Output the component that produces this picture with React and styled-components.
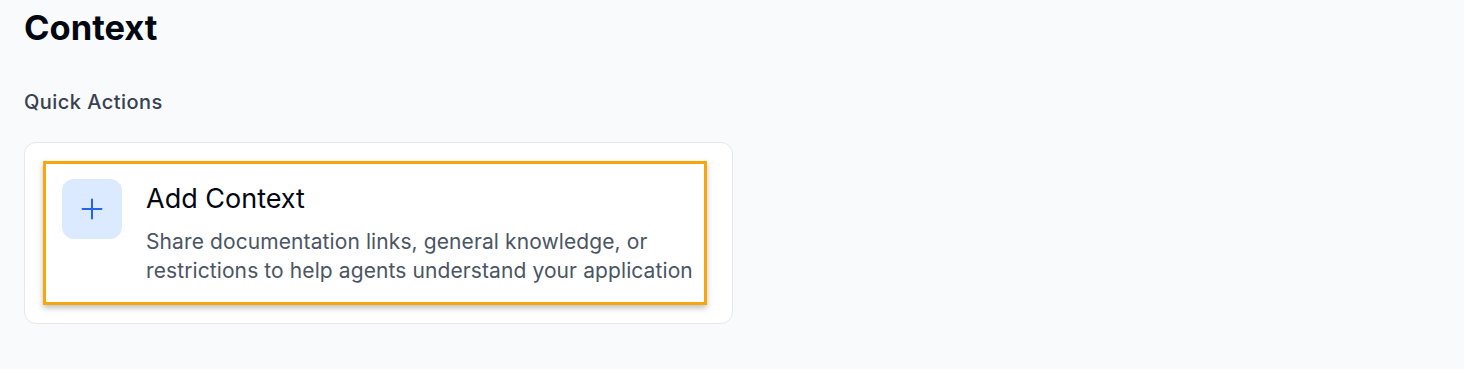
import React from "react";
import styled, { createGlobalStyle } from "styled-components";

const Global = createGlobalStyle`
	html, body {
		margin: 0;
		background: #f9fafb;
		font-family: Inter, "Noto Sans", sans-serif;
	}
`;

const Page = styled.div`
	padding: 6px 24px 24px;
`;

const Title = styled.h1`
	margin: 0;
	font-size: 34.5px;
	line-height: 44px;
	font-weight: 700;
	color: #030712;
`;

const Section = styled.h2`
	margin: 38px 0 26px;
	font-size: 20px;
	line-height: 28px;
	font-weight: 500;
	letter-spacing: 0.45px;
	color: #374151;
`;

const Panel = styled.div`
	width: 709px;
	box-sizing: border-box;
	padding: 18px;
	background: #fff;
	border: 1px solid #e5e7eb;
	border-radius: 12px;
`;

const Action = styled.button`
	display: flex;
	gap: 24px;
	align-items: flex-start;
	box-sizing: border-box;
	padding: 15px 11px 17px 16px;
	background: #fff;
	border: 3px solid #f5a70d;
	box-shadow: 0 3px 6px rgba(0, 0, 0, 0.25);
	font-family: inherit;
	text-align: left;
	cursor: pointer;
`;

const IconBox = styled.div`
	flex: none;
	width: 60px;
	height: 60px;
	border-radius: 12px;
	background: #dbeafe;
	color: #2563eb;
	display: flex;
	align-items: center;
	justify-content: center;
`;

const Body = styled.div`
	display: flex;
	flex-direction: column;
	gap: 12px;
	padding-top: 4px;
`;

const ActionTitle = styled.div`
	font-size: 27px;
	line-height: 32px;
	font-weight: 400;
	color: #030712;
`;

const ActionText = styled.div`
	font-size: 21px;
	line-height: 29px;
	letter-spacing: 0.1px;
	color: #4b5563;
`;

const Plus = () => (
	<svg width="24" height="24" viewBox="0 0 24 24" fill="none" stroke="currentColor" strokeWidth="2" strokeLinecap="round">
		<path d="M12 2.5v19M2.5 12h19" />
	</svg>
);

export default function App() {
	return (
		<Page>
			<Global />
			<Title>Context</Title>
			<Section>Quick Actions</Section>
			<Panel>
				<Action>
					<IconBox>
						<Plus />
					</IconBox>
					<Body>
						<ActionTitle>Add Context</ActionTitle>
						<ActionText>
							Share documentation links, general knowledge, or
							<br />
							restrictions to help agents understand your application
						</ActionText>
					</Body>
				</Action>
			</Panel>
		</Page>
	);
}
